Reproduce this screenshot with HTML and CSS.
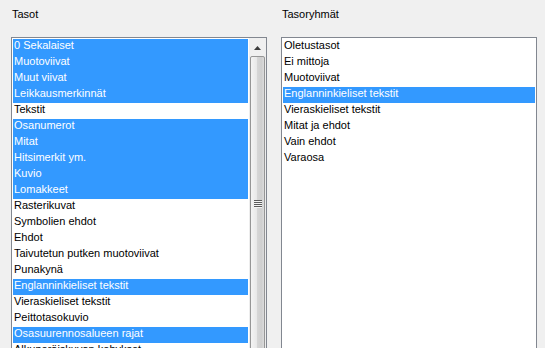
FILE: index.html
```html
<!DOCTYPE html>
<html>
<head>
<meta charset="utf-8">
<link rel="stylesheet" href="styles.css">
</head>
<body>
<div class="panes">
  <section class="pane">
    <div class="label">Tasot</div>
    <div class="listbox">
      <ul class="items">
        <li class="item sel">0 Sekalaiset</li>
        <li class="item sel">Muotoviivat</li>
        <li class="item sel">Muut viivat</li>
        <li class="item sel">Leikkausmerkinnät</li>
        <li class="item">Tekstit</li>
        <li class="item sel">Osanumerot</li>
        <li class="item sel">Mitat</li>
        <li class="item sel">Hitsimerkit ym.</li>
        <li class="item sel">Kuvio</li>
        <li class="item sel">Lomakkeet</li>
        <li class="item">Rasterikuvat</li>
        <li class="item">Symbolien ehdot</li>
        <li class="item">Ehdot</li>
        <li class="item">Taivutetun putken muotoviivat</li>
        <li class="item">Punakynä</li>
        <li class="item sel">Englanninkieliset tekstit</li>
        <li class="item">Vieraskieliset tekstit</li>
        <li class="item">Peittotasokuvio</li>
        <li class="item sel">Osasuurennosalueen rajat</li>
        <li class="item">Alkuperäiskuvan kehykset</li>
      </ul>
      <div class="vscroll">
        <div class="arrow-up">
          <svg width="7" height="4" viewBox="0 0 7 4"><path d="M0 4 L3.5 0 L7 4 Z" fill="#3c3c3c"/></svg>
        </div>
        <div class="thumb"><span class="grip"></span></div>
      </div>
    </div>
  </section>
  <section class="pane">
    <div class="label">Tasoryhmät</div>
    <div class="listbox">
      <ul class="items">
        <li class="item">Oletustasot</li>
        <li class="item">Ei mittoja</li>
        <li class="item">Muotoviivat</li>
        <li class="item sel">Englanninkieliset tekstit</li>
        <li class="item">Vieraskieliset tekstit</li>
        <li class="item">Mitat ja ehdot</li>
        <li class="item">Vain ehdot</li>
        <li class="item">Varaosa</li>
      </ul>
    </div>
  </section>
</div>
</body>
</html>
```
FILE: styles.css
```css
html {
  height: 100%;
  overflow: hidden;
}
body {
  margin: 0;
  height: 100%;
  overflow: hidden;
  background: #f0f0f0;
  font: 11px/13px "Liberation Sans", Arial, sans-serif;
  color: #000;
}
.panes {
  display: flex;
  gap: 14px;
  padding: 8px 0 0 11px;
}
.pane {
  width: 256px;
  flex: none;
}
.label {
  height: 13px;
  padding-left: 1px;
  margin-bottom: 16px;
}
.listbox {
  display: flex;
  height: 330px;
  border: 1px solid #828790;
  background: #fff;
  overflow: hidden;
}
.items {
  list-style: none;
  margin: 0;
  padding: 1px;
  flex: 1;
  min-width: 0;
}
.item {
  height: 13px;
  padding: 0 0 3px 1px;
  white-space: nowrap;
  overflow: hidden;
}
.item.sel {
  background: #3399ff;
  color: #fff;
}
.vscroll {
  width: 17px;
  flex: none;
  display: flex;
  flex-direction: column;
  background: #ededed;
}
.arrow-up {
  height: 18px;
  flex: none;
  display: flex;
  justify-content: center;
  align-items: center;
  padding-top: 1px;
  box-sizing: border-box;
  background: #f0f0f0;
}
.arrow-up svg {
  display: block;
}
.thumb {
  flex: none;
  margin: 0 1px;
  height: 296px;
  border: 1px solid #969696;
  border-radius: 2px;
  box-sizing: border-box;
  background: linear-gradient(to right, #f4f4f4 0%, #e8e8e8 45%, #d6d6d6 50%, #cfcfcf 80%, #dcdcdc 100%);
  display: flex;
  align-items: center;
  justify-content: center;
}
.grip {
  display: block;
  width: 8px;
  height: 8px;
  background: repeating-linear-gradient(to bottom, #5c5c5c 0, #5c5c5c 1px, #f4f4f4 1px, #f4f4f4 2px);
}
```
